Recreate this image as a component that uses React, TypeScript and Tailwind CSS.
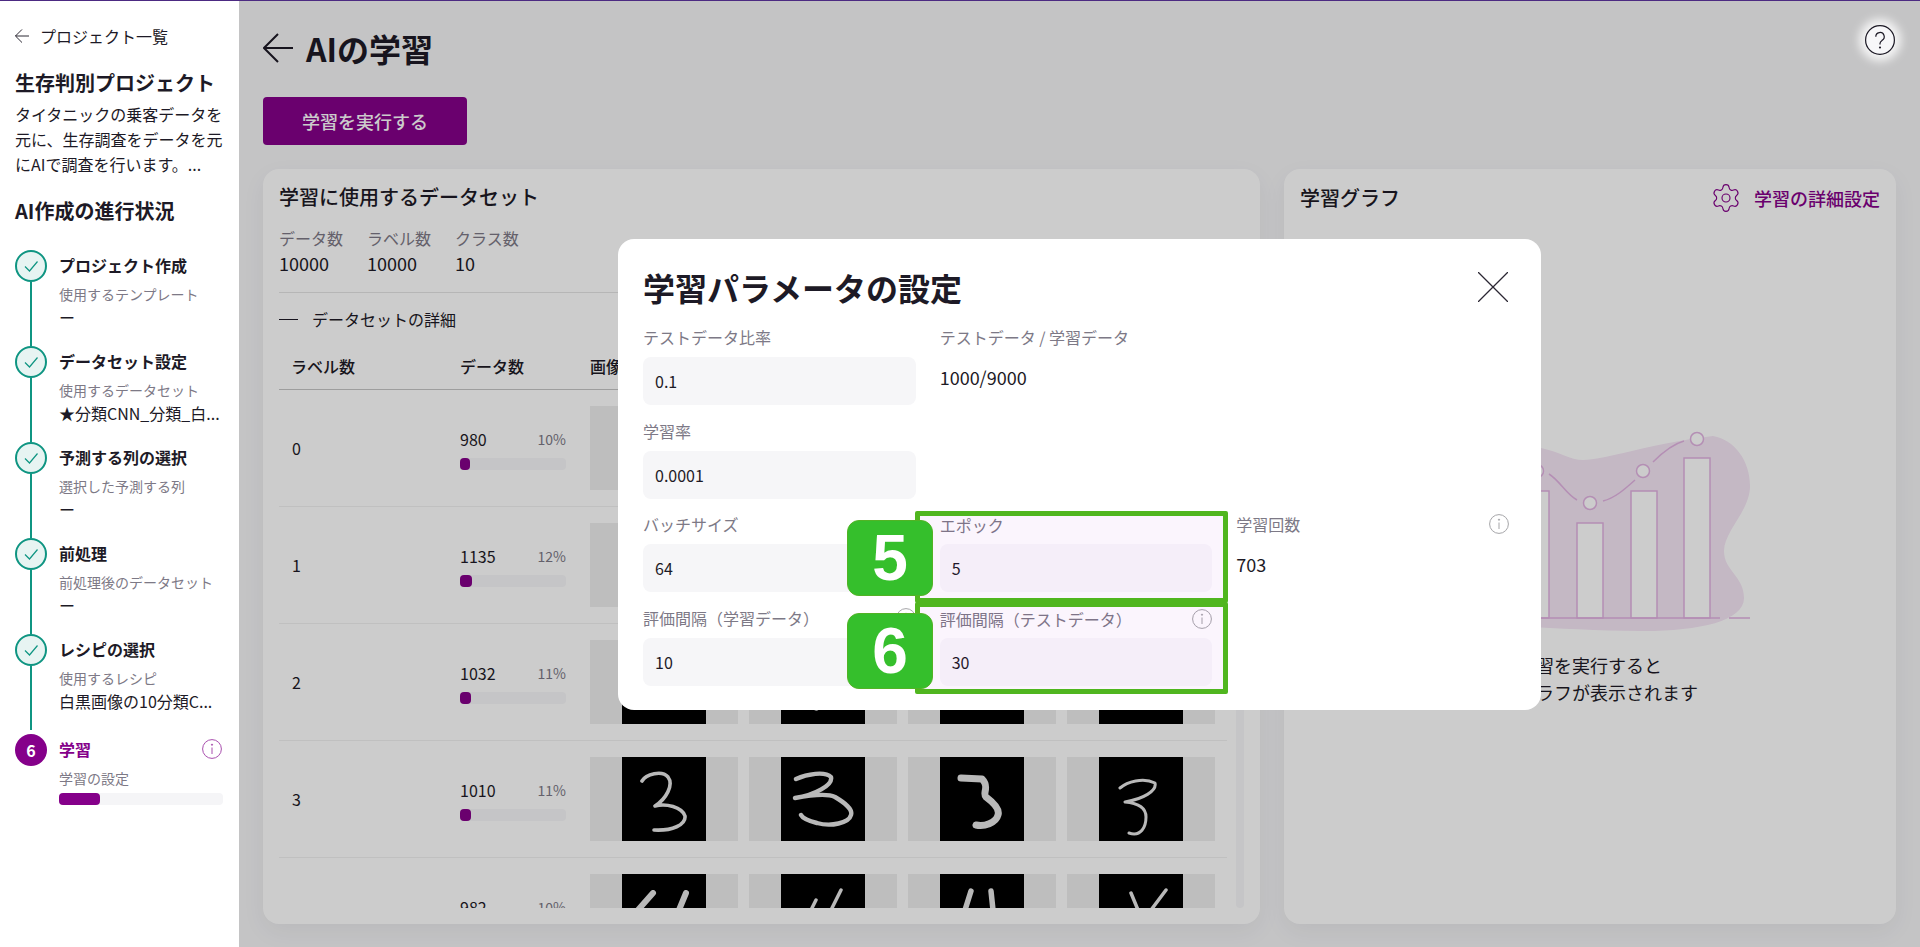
import { Settings } from 'lucide-react';

const STEPS = [
  { title: 'プロジェクト作成', sub: '使用するテンプレート', value: 'ー' },
  { title: 'データセット設定', sub: '使用するデータセット', value: '★分類CNN_分類_白...' },
  { title: '予測する列の選択', sub: '選択した予測する列', value: 'ー' },
  { title: '前処理', sub: '前処理後のデータセット', value: 'ー' },
  { title: 'レシピの選択', sub: '使用するレシピ', value: '白黒画像の10分類C...' },
];

const DIGITS: Record<number, { d: string; w: number }[]> = {
  2: [
    { d: '', w: 0 },
    { d: 'M30 62Q34 74 39 66', w: 3 },
    { d: '', w: 0 },
    { d: '', w: 0 },
  ],
  3: [
    { d: 'M20 24C24 17 40 13 46 20C52 28 44 42 33 49C44 46 60 50 63 59C64 68 50 74 32 73', w: 3.6 },
    { d: 'M15 22C26 17 44 14 50 20C52 28 34 38 14 41C30 38 46 36 54 40C64 46 72 52 70 58C68 66 50 70 36 66C28 64 22 62 20 58', w: 4.4 },
    { d: 'M21 21L42 22C50 30 42 36 46 40C54 46 60 52 58 58C56 66 44 70 36 68', w: 7 },
    { d: 'M21 31C28 25 44 20 56 26C58 34 44 42 26 45C38 46 47 50 47 60C47 70 42 80 30 76', w: 3 },
  ],
  4: [
    { d: 'M31 19L16 36M64 19L57 36', w: 6 },
    { d: 'M60 16L50 36M35 26L30 36', w: 3.5 },
    { d: 'M31 17L25 36M51 17L53 36', w: 5.5 },
    { d: 'M67 16L52 36M32 19L39 36', w: 3.5 },
  ],
};

const ROWS = [
  { label: 0, count: 980, pct: '10%', fill: 10 },
  { label: 1, count: 1135, pct: '12%', fill: 12 },
  { label: 2, count: 1032, pct: '11%', fill: 11 },
  { label: 3, count: 1010, pct: '11%', fill: 11 },
  { label: 4, count: 982, pct: '10%', fill: 10 },
];

function InfoIcon({ className }: { className: string }) {
  return (
    <svg width="20" height="20" viewBox="0 0 20 20" fill="none" stroke="currentColor" strokeWidth="1" className={className}>
      <circle cx="10" cy="10" r="9.4" />
      <path d="M10 8.5V15" />
      <circle cx="10" cy="5.7" r="0.6" fill="currentColor" />
    </svg>
  );
}

function BackArrow({ size, width }: { size: number; width: number }) {
  return (
    <svg width={size} height={size} viewBox="0 0 30 30" fill="none" stroke="currentColor" strokeWidth={width} className="shrink-0">
      <path d="M30 15H1M15 1L1 15L15 29" />
    </svg>
  );
}

function Step({ title, sub, value, last }: { title: string; sub: string; value: string; last: boolean }) {
  return (
    <div className={`flex gap-3 ${last ? 'h-[100px]' : 'h-[96px]'}`}>
      <div className={`flex w-8 flex-col items-center ${last ? 'pb-1' : ''}`}>
        <div className="flex h-8 w-8 shrink-0 items-center justify-center rounded-full border-2 border-[#0f9582] bg-[#e7f4f2]">
          <svg width="18" height="18" viewBox="0 0 18 18" fill="none" stroke="#0f9582" strokeWidth="1.2">
            <path d="M3 9.5L7.5 14L15.5 4.5" />
          </svg>
        </div>
        <div className="w-0.5 flex-1 bg-[#0f9582]" />
      </div>
      <div className="pt-[3px]">
        <div className="text-base leading-6 font-bold">{title}</div>
        <div className="mt-[7px] text-sm leading-5 text-[#7d7986]">{sub}</div>
        <div className="mt-px text-base leading-6 whitespace-nowrap">{value}</div>
      </div>
    </div>
  );
}

function Sidebar() {
  return (
    <aside className="w-[239px] shrink-0 bg-white pt-[23px] pl-[15px] text-[#1d1a26]">
      <div className="flex items-center gap-[11px] text-base leading-6">
        <BackArrow size={14} width={2} />
        <span>プロジェクト一覧</span>
      </div>
      <h2 className="mt-5 text-[20px] leading-[30px] font-bold">生存判別プロジェクト</h2>
      <p className="mt-1 w-[214px] text-base leading-[25px]">
        タイタニックの乗客データを元に、生存調査をデータを元にAIで調査を行います。...
      </p>
      <h2 className="mt-[19px] text-[20px] leading-[30px] font-bold">AI作成の進行状況</h2>
      <div className="mt-6">
        {STEPS.map((s, i) => (
          <Step key={s.title} {...s} last={i === STEPS.length - 1} />
        ))}
        <div className="flex gap-3">
          <div className="flex h-8 w-8 shrink-0 items-center justify-center rounded-full bg-[#85008a] text-base font-bold text-white">
            6
          </div>
          <div className="w-[164px] pt-[3px]">
            <div className="flex items-center justify-between">
              <span className="text-base leading-6 font-bold text-[#85008a]">学習</span>
              <InfoIcon className="mr-px text-[#a94fae]" />
            </div>
            <div className="mt-[7px] text-sm leading-5 text-[#7d7986]">学習の設定</div>
            <div className="mt-[5px] h-3 rounded-sm bg-[#f5f5f7]">
              <div className="h-3 w-[41px] rounded-sm bg-[#85008a]" />
            </div>
          </div>
        </div>
      </div>
    </aside>
  );
}

function Tile({ d, w }: { d?: string; w?: number }) {
  return (
    <div className="flex h-[84px] w-[148px] justify-center bg-[#eeeeee]">
      <svg width="84" height="84" viewBox="0 0 84 84" fill="none" className="bg-black">
        {d ? <path d={d} stroke="#e8e8e8" strokeWidth={w} strokeLinecap="round" strokeLinejoin="round" className="blur-[0.6px]" /> : null}
      </svg>
    </div>
  );
}

function DatasetRow({ row }: { row: (typeof ROWS)[number] }) {
  const digits = DIGITS[row.label];
  return (
    <div className="flex h-[117px] shrink-0 items-center border-b border-[#f1f1f1]">
      <div className="w-[181px] pl-[13px] text-base">{row.label}</div>
      <div className="w-[106px]">
        <div className="flex items-center justify-between leading-6">
          <span className="text-base">{row.count}</span>
          <span className="text-sm text-[#7d7986]">{row.pct}</span>
        </div>
        <div className="mt-[7px] h-3 rounded-sm bg-[#f7f7f9]">
          <div className="h-3 rounded-sm bg-[#85008a]" style={{ width: row.fill }} />
        </div>
      </div>
      <div className="ml-6 flex gap-[11px]">
        {[0, 1, 2, 3].map((i) => (
          <Tile key={i} d={digits?.[i].d} w={digits?.[i].w} />
        ))}
      </div>
    </div>
  );
}

function DatasetCard() {
  return (
    <section className="flex h-[755px] w-[997px] flex-col rounded-2xl bg-white px-4 pt-[13px] pb-4 shadow-[0_8px_24px_rgba(0,0,0,0.05)]">
      <h2 className="text-[20px] leading-[30px] font-medium">学習に使用するデータセット</h2>
      <div className="mt-[14px] flex">
        {[
          ['データ数', '10000'],
          ['ラベル数', '10000'],
          ['クラス数', '10'],
        ].map(([k, v]) => (
          <div key={k} className="w-[88px]">
            <div className="text-base leading-6 text-[#7d7986]">{k}</div>
            <div className="text-[18px] leading-[26px]">{v}</div>
          </div>
        ))}
      </div>
      <div className="mt-4 border-t border-[#e4e4e4]" />
      <div className="mt-[14px] flex items-center gap-[14px] text-base leading-6">
        <div className="h-px w-[19px] bg-[#1d1a26]" />
        <span>データセットの詳細</span>
      </div>
      <div className="flex min-h-0 flex-1 gap-[9px]">
        <div className="flex min-h-0 w-[948px] flex-col">
          <div className="mt-[23px] flex shrink-0 border-b border-[#c6c6c6] pb-[11px] text-base leading-6 font-medium">
            <div className="w-[181px] pl-3">ラベル数</div>
            <div className="w-[130px]">データ数</div>
            <div>画像</div>
          </div>
          <div className="flex min-h-0 flex-1 flex-col overflow-hidden">
            {ROWS.map((r) => (
              <DatasetRow key={r.label} row={r} />
            ))}
          </div>
        </div>
        <div className="mt-[71px] w-2 rounded-sm bg-[#f7f7f9]" />
      </div>
    </section>
  );
}

function ChartIllustration() {
  return (
    <svg width="320" height="210" viewBox="0 0 320 210" fill="none" className="mx-auto">
      <path
        d="M283 10C305 14 320 35 320 60C320 85 294 105 294 125C294 145 314 150 314 172C314 195 270 205 213 205C150 205 100 200 60 200C20 180 30 40 111 22C130 26 140 34 153 34C175 34 213 19 283 10Z"
        fill="#f6e6f6"
      />
      <g stroke="#e2b3e2" strokeWidth="1.5">
        <rect x="254" y="32" width="26" height="160" fill="white" />
        <rect x="201" y="65" width="26" height="127" fill="white" />
        <rect x="147" y="97" width="26" height="95" fill="white" />
        <rect x="93" y="65" width="26" height="127" fill="white" />
        <path d="M40 192H290M299 192H320" />
        <path d="M119 48C130 55 136 68 147 74M173 75C185 72 195 63 205 54M223 36C232 27 243 18 254 15" />
        <circle cx="267" cy="13" r="6.5" fill="white" />
        <circle cx="213" cy="45" r="6.5" fill="white" />
        <circle cx="160" cy="77" r="6.5" fill="white" />
        <circle cx="107" cy="45" r="6.5" fill="white" />
      </g>
    </svg>
  );
}

function GraphCard() {
  return (
    <section className="h-[755px] flex-1 rounded-2xl bg-white px-4 pt-[13px] shadow-[0_8px_24px_rgba(0,0,0,0.05)]">
      <div className="flex items-center justify-between">
        <h2 className="text-[20px] leading-[30px] font-medium">学習グラフ</h2>
        <div className="flex items-center gap-3 text-[#85008a]">
          <Settings size={32} strokeWidth={0.85} />
          <span className="text-[18px] leading-[27px] font-medium">学習の詳細設定</span>
        </div>
      </div>
      <div className="mt-[212px]">
        <ChartIllustration />
      </div>
      <p className="mt-[16px] text-center text-[18px] leading-[27px]">
        学習を実行すると
        <br />
        学習グラフが表示されます
      </p>
    </section>
  );
}

function Field({
  label,
  value,
  info,
  readOnly,
  highlight,
}: {
  label: string;
  value: string;
  info?: boolean;
  readOnly?: boolean;
  highlight?: boolean;
}) {
  return (
    <div>
      <div className={`flex h-6 items-center justify-between text-base text-[#7d7986] ${highlight ? '' : 'pb-0.5'}`}>
        <span>{label}</span>
        {info ? <InfoIcon className="text-[#a5a5a8]" /> : null}
      </div>
      {readOnly ? (
        <div className="mt-[14px] text-[18px] leading-[27px]">{value}</div>
      ) : (
        <div className={`mt-[7px] flex h-12 items-center rounded-lg px-3 text-base ${highlight ? 'bg-[#f9f8fb]' : 'bg-[#f6f6f8]'}`}>
          {value}
        </div>
      )}
    </div>
  );
}

function Badge({ n, className }: { n: number; className: string }) {
  return (
    <div
      className={`absolute left-[229px] flex h-[76px] w-[86px] items-center justify-center rounded-xl border border-[#52b325] bg-[#35bf2c] font-['Liberation_Sans',sans-serif] text-[64px] font-bold text-white ${className}`}
    >
      {n}
    </div>
  );
}

function ParamModal() {
  return (
    <div className="absolute top-[238px] left-[379px] z-10 h-[471px] w-[923px] rounded-2xl bg-white px-[25px] pt-6">
      <div className="flex h-12 items-center justify-between pr-2">
        <h1 className="text-[32px] font-bold">学習パラメータの設定</h1>
        <svg width="30" height="30" viewBox="0 0 30 30" stroke="#2b2733" strokeWidth="1.3">
          <path d="M0 0L30 30M30 0L0 30" />
        </svg>
      </div>
      <div className="mt-[15px] grid w-[866px] grid-cols-3 gap-x-6 gap-y-[14.7px]">
        <Field label="テストデータ比率" value="0.1" />
        <Field label="テストデータ / 学習データ" value="1000/9000" readOnly />
        <div />
        <Field label="学習率" value="0.0001" />
        <div />
        <div />
        <Field label="バッチサイズ" value="64" />
        <Field label="エポック" value="5" highlight />
        <Field label="学習回数" value="703" info readOnly />
        <Field label="評価間隔（学習データ）" value="10" info />
        <Field label="評価間隔（テストデータ）" value="30" info highlight />
      </div>
      <div className="pointer-events-none absolute top-[272px] left-[297px] h-[92px] w-[313px] rounded-[2px] border-[5px] border-[#50b61f] bg-[#9600c80a]" />
      <div className="pointer-events-none absolute top-[363px] left-[297px] h-[92px] w-[313px] rounded-[2px] border-[5px] border-[#50b61f] bg-[#9600c80a]" />
      <Badge n={5} className="top-[281px]" />
      <Badge n={6} className="top-[374px]" />
    </div>
  );
}

export default function App() {
  return (
    <div className="flex h-[947px] flex-col overflow-hidden font-['Noto_Sans_CJK_JP','Noto_Sans',sans-serif] text-[#1d1a26]">
      <div className="h-px shrink-0 bg-[#4c2a82]" />
      <div className="flex min-h-0 flex-1">
        <Sidebar />
        <main className="relative flex-1 overflow-hidden bg-[#f5f5f7] px-6">
          <div className="mt-[23px] flex h-12 items-center gap-[13px]">
            <BackArrow size={30} width={2} />
            <h1 className="text-[32px] font-bold">AIの学習</h1>
          </div>
          <button className="mt-[25px] block h-12 w-[204px] rounded bg-[#85008a] text-[18px] font-medium text-white">
            学習を実行する
          </button>
          <div className="mt-6 flex gap-6">
            <DatasetCard />
            <GraphCard />
          </div>
          <div className="absolute inset-0 bg-black/20" />
          <ParamModal />
          <div className="absolute top-[24px] right-[25px] z-10 h-[30px] w-[30px] rounded-full shadow-[0_0_10px_6px_rgba(255,255,255,0.85)]">
            <svg width="30" height="30" viewBox="0 0 30 30" fill="none" stroke="#1d1a26" strokeWidth="1.2">
              <circle cx="15" cy="15" r="14.4" fill="#f7f7f9" />
              <path d="M10.8 11.8A4.2 4.2 0 1 1 17 15.4C15.7 16.2 15 17 15 18.6V19.4" />
              <circle cx="15" cy="22.5" r="0.5" fill="#1d1a26" />
            </svg>
          </div>
        </main>
      </div>
    </div>
  );
}
